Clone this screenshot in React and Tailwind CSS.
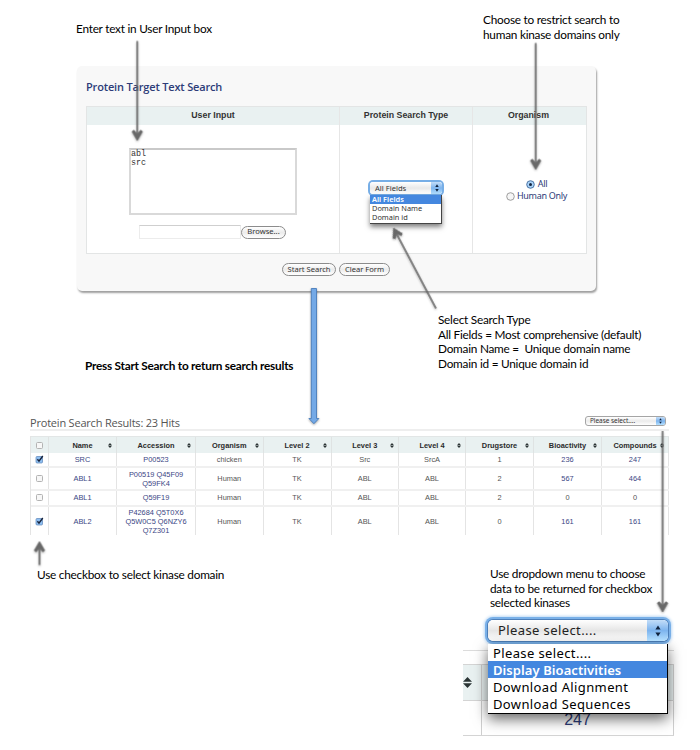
import React from "react";

const NOTE = "font-['Lato',sans-serif] text-[11.8px] leading-[14.6px] tracking-[-0.24px] text-black whitespace-pre";
const UI = "font-['Noto_Sans',sans-serif] whitespace-nowrap";
const BTN =
  "flex items-center justify-center h-[13px] rounded-full border border-[#8c8c8c] bg-linear-to-b from-white via-[#ececec] to-white text-[7.6px] leading-none text-[#333] font-['Noto_Sans',sans-serif] whitespace-nowrap";

function Stepper({ className, size }) {
  return (
    <span className={"flex items-center justify-center bg-linear-to-b from-[#c3ddf8] via-[#7db4ee] to-[#b4e0ff] " + className}>
      <svg width={size} height={size * 2} viewBox="0 0 6 12" fill="#10233f">
        <path d="M3 0.5 5.6 4.6H0.4zM3 11.5 0.4 7.4h5.2z" />
      </svg>
    </span>
  );
}

function Sort({ className }) {
  return (
    <svg className={className} viewBox="0 0 10 12" fill="#2b3435">
      <path d="M5 0 10 5.2H0zM5 12 0 6.8h10z" />
    </svg>
  );
}

function Check({ on }) {
  return on ? (
    <svg width="9" height="9" viewBox="0 0 9 9">
      <rect x="1" y="1.5" width="6.5" height="6.5" rx="1" fill="#8fc0f2" stroke="#5b84b8" strokeWidth=".7" />
      <path d="M2.4 4.2 4 6.2 7.8 1" fill="none" stroke="#17233c" strokeWidth="1.4" />
    </svg>
  ) : (
    <span className="size-[7px] rounded-[1.5px] border border-[#b3b3b3] bg-[#f7f7f7]" />
  );
}

function Radio({ on }) {
  return (
    <svg width="9" height="9" viewBox="0 0 9 9">
      <circle cx="4.5" cy="4.5" r="3.8" fill={on ? "#a9d2f8" : "#f6f6f6"} stroke={on ? "#426a9c" : "#949494"} strokeWidth=".9" />
      {on && <circle cx="4.5" cy="4.5" r="1.5" fill="#14243f" />}
    </svg>
  );
}

const heads = ["Name", "Accession", "Organism", "Level 2", "Level 3", "Level 4", "Drugstore", "Bioactivity", "Compounds"];
const rows = [
  { on: true, h: "h-[15px]", c: ["SRC", "P00523", "chicken", "TK", "Src", "SrcA", "1", "236", "247"] },
  { on: false, h: "h-[23px]", c: ["ABL1", "P00519 Q45F09\nQ59FK4", "Human", "TK", "ABL", "ABL", "2", "567", "464"] },
  { on: false, h: "h-[15.5px]", c: ["ABL1", "Q59F19", "Human", "TK", "ABL", "ABL", "2", "0", "0"] },
  { on: true, h: "h-[31px]", c: ["ABL2", "P42684 Q5T0X6\nQ5W0C5 Q6NZY6\nQ7Z301", "Human", "TK", "ABL", "ABL", "0", "161", "161"] },
];
const COLS = "grid grid-cols-[18px_68px_79px_67.5px_68px_67.5px_67px_68px_68px_67px]";

function SearchPanel() {
  return (
    <section className="ml-[77px] h-[225px] w-[519px] rounded-[5px] bg-[#f8f8f8] pl-[9px] shadow-[1px_2px_2px_rgba(0,0,0,0.38)]">
      <h1 className="h-[40px] pt-[13px] font-['Open_Sans',sans-serif] text-[11px] leading-[16px] font-semibold tracking-[-0.17px] text-[#2d3c78] whitespace-nowrap">
        Protein Target Text Search
      </h1>
      <div className="grid h-[148px] w-[501px] grid-cols-[253px_133px_113px] grid-rows-[18px_128px] border border-[#e3e5e5] bg-white">
        {["User Input", "Protein Search Type", "Organism"].map((t, i) => (
          <div
            key={t}
            className={
              "flex items-center justify-center bg-[#e9f1f1] font-['Liberation_Sans',sans-serif] text-[8.8px] font-bold text-[#333] whitespace-nowrap " +
              (i < 2 ? "border-r border-[#e6e6e6]" : "pr-[2px]")
            }
          >
            {t}
          </div>
        ))}
        <div className="border-r border-[#e6e6e6] pt-[23px] pl-[42px]">
          <div className="h-[67px] w-[168px] border-2 border-[#d9d9d9] border-t-[#c9c9c9] font-['Liberation_Mono',monospace] text-[8.4px] leading-[9.3px] text-[#333]">
            abl
            <br />
            src
          </div>
          <div className="mt-[10px] ml-[10px] flex items-center">
            <div className="h-[14px] w-[102px] border border-[#ececec] border-t-[#cfcfcf]" />
            <button className={BTN + " w-[45px]"}>Browse...</button>
          </div>
        </div>
        <div className="border-r border-[#e6e6e6] pt-[57px] pl-[30px]">
          <div className="w-[72px]">
            <div className="flex h-[12px] items-stretch overflow-hidden rounded-[3px] bg-linear-to-b from-white via-[#e9e9e9] to-white ring-2 ring-[#77aee6]">
              <span className={UI + " flex-1 pl-[5px] text-[7.6px] leading-[12px] text-[#333]"}>All Fields</span>
              <Stepper className="w-[11px]" size={4} />
            </div>
            <div className={UI + " relative mt-px h-[29px] border-r border-b border-[#444] bg-white text-[7.4px] leading-[9.2px] text-[#333] shadow-[0_3px_5px_rgba(0,0,0,0.5)]"}>
              <div className="bg-[#4487df] pl-[2px] font-semibold text-white">All Fields</div>
              <div className="pl-[2px]">Domain Name</div>
              <div className="pl-[2px]">Domain id</div>
            </div>
          </div>
        </div>
        <div className={UI + " flex flex-col items-center pt-[53px] pl-[14px] text-[9px] leading-[12px] tracking-[-0.3px] text-[#2d3c78]"}>
          <div className="flex h-[12px] items-center gap-[3px]">
            <Radio on />
            <span>All</span>
          </div>
          <div className="flex h-[12px] items-center gap-[2px]">
            <Radio />
            <span>Human Only</span>
          </div>
        </div>
      </div>
      <div className="ml-[196px] flex gap-[3px] pt-[9px]">
        <button className={BTN + " w-[54px]"}>Start Search</button>
        <button className={BTN + " w-[51px]"}>Clear Form</button>
      </div>
    </section>
  );
}

function Results() {
  return (
    <section className="ml-[30px] h-[121px] w-[639px]">
      <div className="flex h-[17px] items-start justify-between border-b-2 border-[#eeeeee]">
        <h2 className="font-['Open_Sans',sans-serif] text-[11px] leading-[17px] tracking-[-0.2px] text-[#555] whitespace-nowrap">Protein Search Results: 23 Hits</h2>
        <div className="mt-[2px] mr-[3px] flex h-[10px] w-[81px] overflow-hidden rounded-[3px] border border-[#a5a5a5] bg-linear-to-b from-white via-[#ebebeb] to-white">
          <span className={UI + " flex-1 pl-[4px] text-[6.4px] leading-[8px] text-[#333]"}>Please select....</span>
          <Stepper className="w-[9px]" size={3} />
        </div>
      </div>
      <div className="mt-[5px] h-[99px] w-[639px] overflow-hidden border-l border-[#e4e4e4] font-['Liberation_Sans',sans-serif] text-[7.4px] leading-[9px]">
        <div className={COLS + " h-[17px] border-t border-[#e2e6e6] bg-[#e9f1f1] font-bold text-[#2b2b2b]"}>
          <div className="flex items-center justify-center border-r border-[#dfe3e3]">
            <Check />
          </div>
          {heads.map((h) => (
            <div key={h} className="flex items-center border-r border-[#dfe3e3]">
              <span className="flex-1 text-center">{h}</span>
              <Sort className="mr-[4px] -ml-[8px] h-[5px] w-[4px]" />
            </div>
          ))}
        </div>
        {rows.map((r, i) => (
          <div key={i} className={COLS + " border-b-2 border-[#f0f0f0] text-[#555] " + r.h}>
            <div className="flex items-center justify-center border-r border-[#e4e4e4]">
              <Check on={r.on} />
            </div>
            {r.c.map((t, j) => (
              <div
                key={j}
                className={
                  "flex items-center justify-center border-r border-[#e4e4e4] text-center whitespace-pre " +
                  (j < 2 || (j > 6 && t !== "0") ? "text-[#3a4684]" : "")
                }
              >
                {t}
              </div>
            ))}
          </div>
        ))}
      </div>
    </section>
  );
}

function MenuCloseup() {
  return (
    <section className="relative ml-[463px] h-[138px] w-[211px] pt-[38px]">
      <div className="h-[14px] border-t border-[#dcdcdc]" />
      <div className="grid h-[37px] grid-cols-[19px_192px] border-y border-[#d4d4d4] bg-[#e9f1f1]">
        <div className="flex items-center border-r border-[#cfcfcf]">
          <Sort className="h-[11px] w-[9px]" />
        </div>
        <div className="border-r border-[#cfcfcf]" />
      </div>
      <div className="grid h-[35px] grid-cols-[19px_192px] border-b border-[#d4d4d4]">
        <div className="border-r border-[#cfcfcf]" />
        <div className="border-r border-[#cfcfcf] pt-[11px] text-center font-['Liberation_Sans',sans-serif] text-[16px] leading-[16px] text-[#2d3c78]">247</div>
      </div>
      <div className="absolute top-[8px] left-[25px] w-[180px]">
        <div className="flex h-[21px] overflow-hidden rounded-[5px] bg-linear-to-b from-white via-[#e6e6e6] to-white shadow-[0_0_0_1px_#4d7fb9,0_0_0_3px_#79b0e8,0_0_3px_4px_#bcd8f4]">
          <span className={UI + " flex-1 pl-[10px] text-[13px] leading-[21px] tracking-[0.4px] text-[#222]"}>Please select....</span>
          <Stepper className="w-[21px]" size={6} />
        </div>
        <div className={UI + " mt-[3px] h-[70px] border-r border-b border-black bg-white text-[13px] leading-[17px] tracking-[0.38px] text-black shadow-[0_5px_13px_rgba(0,0,0,0.6)]"}>
          <div className="h-[17px] pl-[5px] leading-[18px]">Please select....</div>
          <div className="h-[17px] bg-[#4487df] pl-[5px] leading-[18px] font-semibold tracking-[0.08px] text-white">Display Bioactivities</div>
          <div className="h-[17px] pl-[5px] leading-[18px]">Download Alignment</div>
          <div className="h-[17px] pl-[5px] leading-[18px]">Download Sequences</div>
        </div>
      </div>
    </section>
  );
}

function Arrow({ x1, y1, x2, y2 }) {
  const a = (Math.atan2(y2 - y1, x2 - x1) * 180) / Math.PI;
  const len = Math.hypot(x2 - x1, y2 - y1);
  return (
    <g transform={`translate(${x2} ${y2}) rotate(${a})`}>
      <path d={`M${-len} 0H-3`} stroke="#686868" strokeWidth="1.6" />
      <path d="M0 0-9 5.2-10.3 3.3-6.3 0-10.3-3.3-9-5.2z" fill="#686868" stroke="#686868" strokeWidth=".6" strokeLinejoin="round" />
    </g>
  );
}

function Arrows() {
  return (
    <svg className="pointer-events-none absolute inset-0" width="700" height="750">
      <g className="drop-shadow-[0_1px_1px_rgba(0,0,0,0.35)]">
        <Arrow x1={137.3} y1={41} x2={137.3} y2={140.5} />
        <Arrow x1={535.7} y1={43} x2={535.7} y2={169.5} />
        <Arrow x1={436} y1={308.5} x2={393.5} y2={228} />
        <Arrow x1={662.6} y1={431} x2={662.6} y2={612} />
        <Arrow x1={39.5} y1={565} x2={39.5} y2={541.5} />
        <path d="M311.3 288.5h5.2v130h2.4l-5 5.2-5-5.2h2.4z" fill="#74a9e6" stroke="#4a7ebb" strokeWidth=".9" />
      </g>
    </svg>
  );
}

export default function App() {
  return (
    <main className="relative flex h-[750px] w-[700px] flex-col overflow-hidden bg-white">
      <div className="flex h-[66px] shrink-0 pl-[76px]">
        <p className={NOTE + " w-[407px] pt-[22px]"}>Enter text in User Input box</p>
        <p className={NOTE + " pt-[13px]"}>{"Choose to restrict search to\nhuman kinase domains only"}</p>
      </div>
      <SearchPanel />
      <div className="flex h-[123px] shrink-0 pl-[85px]">
        <p className={NOTE + " w-[353px] pt-[68px] font-bold"}>Press Start Search to return search results</p>
        <p className={NOTE + " pt-[22px]"}>
          {"Select Search Type\nAll Fields = Most comprehensive (default)\nDomain Name =  Unique domain name\nDomain id = Unique domain id"}
        </p>
      </div>
      <Results />
      <div className="flex h-[77px] shrink-0 pl-[37px]">
        <p className={NOTE + " w-[453px] pt-[33px]"}>Use checkbox to select kinase domain</p>
        <p className={NOTE + " pt-[32px]"}>{"Use dropdown menu to choose\ndata to be returned for checkbox\nselected kinases"}</p>
      </div>
      <MenuCloseup />
      <Arrows />
    </main>
  );
}
